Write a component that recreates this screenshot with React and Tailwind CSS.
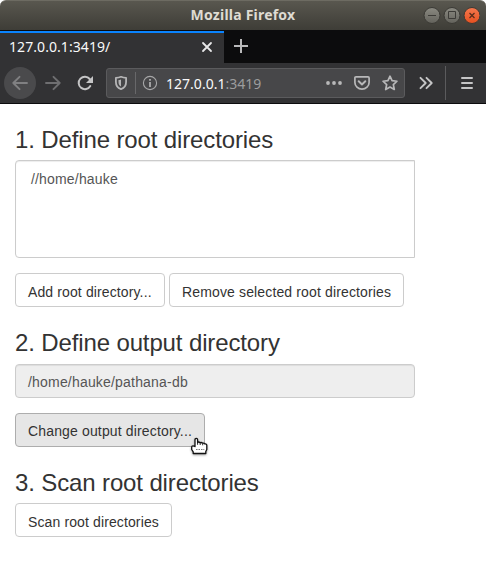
const ui = "font-['Noto_Sans',sans-serif]";

function TitleBar() {
  return (
    <div className="bg-white">
      <header className="relative flex h-[30px] items-center justify-end rounded-t-[6px] border-t border-[#6d6b62] bg-linear-to-b from-[#59574f] to-[#3e3d37] pr-[6px]">
        <h1 className={`${ui} absolute inset-x-0 top-[3px] text-center text-[14px] leading-[22px] font-bold tracking-[0.22px] text-[#dfdbd2]`}>
          Mozilla Firefox
        </h1>
        <svg width="58" height="18" viewBox="0 0 58 18" fill="none">
          <defs>
            <linearGradient id="grey" x1="0" y1="0" x2="0" y2="1">
              <stop stopColor="#8b8a82" />
              <stop offset="1" stopColor="#63625b" />
            </linearGradient>
            <linearGradient id="orange" x1="0" y1="0" x2="0" y2="1">
              <stop stopColor="#f6794f" />
              <stop offset="1" stopColor="#e5501f" />
            </linearGradient>
          </defs>
          <circle cx="10" cy="8.500" r="8" fill="url(#grey)" stroke="#3a3934" />
          <circle cx="30" cy="8.500" r="8" fill="url(#grey)" stroke="#3a3934" />
          <circle cx="50" cy="8.500" r="8" fill="url(#orange)" stroke="#3a3934" />
          <path d="M6 8.500h8M26.500 4.500h7v7h-7z" stroke="#3c3b37" />
          <path d="M47.500 6l5 5m0-5l-5 5" stroke="#5a2d1b" strokeWidth="1.300" />
        </svg>
      </header>
    </div>
  );
}

function TabStrip() {
  return (
    <div className="flex h-[33px] bg-[#0c0c0d]">
      <div className="flex w-[224px] items-center justify-between bg-[#323234] pr-[11px] pl-[9px] shadow-[inset_0_1px_0_#0c0c0d,inset_0_3px_0_#0a84ff]">
        <span className={`${ui} text-[14px] leading-[20px] tracking-[0.07px] text-[#f9f9fa]`}>127.0.0.1:3419/</span>
        <svg width="12" height="12" viewBox="0 0 12 12" fill="none" stroke="#e8e8e9" strokeWidth="1.800" strokeLinecap="round">
          <path d="M2 2l8 8M10 2l-8 8" />
        </svg>
      </div>
      <svg className="mt-[8px] ml-[9px]" width="16" height="16" viewBox="0 0 16 16" stroke="#b9b9ba" strokeWidth="2">
        <path d="M8 1v14M1 8h14" />
      </svg>
    </div>
  );
}

function AddressBar() {
  return (
    <div className="flex h-[30px] w-[299px] items-center rounded-[3px] border border-[#5b5b5d] bg-[#474749]">
      <svg className="ml-[6px]" width="16" height="16" viewBox="0 0 16 16" fill="none" stroke="#b5b5b6" strokeWidth="1.800">
        <path d="M8 1.800c2 .9 3.600 1 5.100 1v4.100c0 3.700-2 6-5.100 7.300-3.100-1.300-5.100-3.600-5.100-7.300V2.800c1.500 0 3.100-.1 5.100-1z" strokeLinejoin="round" />
        <path d="M8 4.500c-.9.400-1.700.5-2.500.6v1.800c0 2 .8 3.500 2.500 4.600z" fill="#b5b5b6" stroke="none" />
      </svg>
      <span className="ml-[6px] h-[22px] w-px bg-[#68686a]" />
      <svg className="ml-[6px]" width="16" height="16" viewBox="0 0 16 16" fill="none" stroke="#a7a7a8">
        <circle cx="8" cy="8" r="6.600" strokeWidth="1.100" />
        <path d="M8 7v5M8 4v1.800" strokeWidth="1.900" />
      </svg>
      <span className={`${ui} ml-[8px] w-[155px] pt-[1px] text-[14px] leading-[20px] tracking-[0.02px] text-[#f9f9fa]`}>
        127.0.0.1<span className="text-[#9c9c9d]">:3419</span>
      </span>
      <svg className="ml-[5px]" width="16" height="16" viewBox="0 0 16 16" fill="#b8b8b9">
        <circle cx="2" cy="8" r="1.900" />
        <circle cx="8" cy="8" r="1.900" />
        <circle cx="14" cy="8" r="1.900" />
      </svg>
      <svg className="ml-[12px]" width="16" height="16" viewBox="0 0 16 16" fill="none" stroke="#b8b8b9" strokeWidth="1.700" strokeLinecap="round" strokeLinejoin="round">
        <path d="M2 1.800h12c.7 0 1.100.4 1.100 1.100V7.500a7.100 6.700 0 0 1-14.200 0V2.900C.9 2.200 1.300 1.800 2 1.800z" />
        <path d="M4.700 6.300L8 9.400l3.300-3.100" strokeWidth="2" />
      </svg>
      <svg className="ml-[12px]" width="16" height="16" viewBox="0 0 16 16" fill="none" stroke="#b8b8b9" strokeWidth="1.700" strokeLinejoin="round">
        <path d="M8 1.200l2.050 4.450 4.900.6-3.600 3.350.95 4.900L8 12.100l-4.300 2.400.95-4.900-3.600-3.350 4.900-.6z" />
      </svg>
    </div>
  );
}

function NavBar() {
  return (
    <nav className="flex h-[41px] items-center border-b border-[#0c0c0d] bg-[#323234]">
      <div className="ml-[4px] flex size-[32px] items-center justify-center rounded-full bg-[#4a4a4c]">
        <svg width="16" height="16" viewBox="0 0 16 16" fill="none" stroke="#808082" strokeWidth="1.900" strokeLinecap="round" strokeLinejoin="round">
          <path d="M15 8H1.300M7.500 1.800L1.300 8l6.200 6.200" />
        </svg>
      </div>
      <svg className="ml-[9px]" width="16" height="16" viewBox="0 0 16 16" fill="none" stroke="#6f6f71" strokeWidth="1.900" strokeLinecap="round" strokeLinejoin="round">
        <path d="M1 8h13.700M8.500 1.800L14.700 8l-6.200 6.200" />
      </svg>
      <svg className="ml-[16px]" width="16" height="16" viewBox="0 0 16 16" fill="none" stroke="#c5c5c6" strokeWidth="2">
        <path d="M12.700 4A6.200 6.200 0 1 0 13.300 11" strokeLinecap="round" />
        <path d="M16 1v7H9z" fill="#c5c5c6" stroke="none" />
      </svg>
      <div className="pl-[13px]">
        <AddressBar />
      </div>
      <svg className="ml-[13px]" width="16" height="16" viewBox="0 0 16 16" fill="none" stroke="#c5c5c6" strokeWidth="1.900" strokeLinecap="round" strokeLinejoin="round">
        <path d="M2.500 2.800l5.200 5.200-5.200 5.200M8.500 2.800l5.200 5.200-5.200 5.200" />
      </svg>
      <span className="ml-[11px] h-[34px] w-px bg-[#5b5b5d]" />
      <svg className="ml-[13px]" width="16" height="16" viewBox="0 0 16 16" stroke="#c5c5c6" strokeWidth="2" strokeLinecap="round">
        <path d="M3 3h10M3 8h10M3 13h10" />
      </svg>
    </nav>
  );
}

function Heading({ children }) {
  return <h2 className="text-[24px] leading-[26px] font-normal tracking-[-0.13px]">{children}</h2>;
}

function Button({ className, active, children }) {
  return (
    <button
      className={`h-[34px] rounded-[4px] border pl-[12px] text-left text-[14px] leading-[20px] whitespace-nowrap ${className} ${
        active ? "border-[#adadad] bg-[#e6e6e6] pt-[2px]" : "border-[#cccccc] bg-white pt-[4px]"
      }`}
    >
      {children}
    </button>
  );
}

function HandCursor() {
  return (
    <svg className="absolute top-[23px] left-[175px] drop-shadow-[0_1px_1px_rgba(0,0,0,0.35)]" width="18" height="20" viewBox="0 0 18 20">
      <path
        d="M5 10.500V3.700q0-1.300 1.300-1.300t1.300 1.300V6.500q1.200-1 2.500.2 1.500-.6 2.500.5 1.500-.5 2.300.8 1.900-.3 1.900 1.300v4.200l-1 2v2H3.200v-1.700L1.700 13.500v-2.500q0-1.200 1.200-1.200T5 10.500z"
        fill="#fff"
        stroke="#111"
        strokeWidth="1.300"
        strokeLinejoin="round"
      />
      <path d="M7.600 6.500v2.300M10.200 7v2M12.700 7.500v1.800" stroke="#111" strokeWidth=".9" />
      <path d="M6 13.500h1.500M8.500 13.500h1.500M11 13.500h1.500M13.300 13.500h1" stroke="#777" />
    </svg>
  );
}

export default function App() {
  return (
    <div className="flex h-[566px] w-[486px] flex-col overflow-hidden bg-white">
      <TitleBar />
      <TabStrip />
      <NavBar />
      <main className="flex flex-col px-[15px] pt-[23px] font-['Liberation_Sans',Arial,sans-serif] text-[#333333]">
        <Heading>1. Define root directories</Heading>
        <div className="mt-[7px] h-[98px] w-[400px] rounded-l-[4px] border border-[#cccccc] px-[15px] pt-[8px] text-[14px] leading-[20px] tracking-[0.17px] text-[#555555] shadow-[inset_0_1px_1px_rgba(0,0,0,0.075)]">
          //home/hauke
        </div>
        <div className="mt-[15px] flex gap-[4px]">
          <Button className="w-[150px] tracking-[0.12px]">Add root directory...</Button>
          <Button className="w-[235px] tracking-[0.14px]">Remove selected root directories</Button>
        </div>
        <div className="mt-[23px]">
          <Heading>2. Define output directory</Heading>
        </div>
        <div className="mt-[8px] h-[34px] w-[400px] rounded-[4px] border border-[#cccccc] bg-[#eeeeee] px-[12px] pt-[7px] text-[14px] leading-[20px] tracking-[0.19px] text-[#555555] shadow-[inset_0_1px_1px_rgba(0,0,0,0.075)]">
          /home/hauke/pathana-db
        </div>
        <div className="relative mt-[15px] flex">
          <Button active className="w-[190px] tracking-[0.15px]">Change output directory...</Button>
          <HandCursor />
        </div>
        <div className="mt-[23px]">
          <Heading>3. Scan root directories</Heading>
        </div>
        <div className="mt-[7px] flex">
          <Button className="w-[157px] tracking-[0.12px]">Scan root directories</Button>
        </div>
      </main>
    </div>
  );
}
